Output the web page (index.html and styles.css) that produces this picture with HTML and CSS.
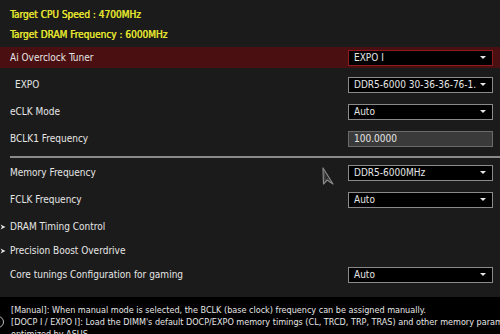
FILE: index.html
```html
<!DOCTYPE html>
<html lang="en">
<head>
    <meta charset="UTF-8">
    <title>Ai Tweaker</title>
    <link rel="stylesheet" href="styles.css">
</head>
<body>
    <div class="screen">
        <div class="targets">
            <p class="target-text">Target CPU Speed : 4700MHz</p>
            <p class="target-text">Target DRAM Frequency : 6000MHz</p>
        </div>

        <div class="settings">
            <div class="row active">
                <span class="label">Ai Overclock Tuner</span>
                <div class="select select-active"><span>EXPO I</span><span class="caret"></span></div>
            </div>
            <div class="row">
                <span class="label label-sub">EXPO</span>
                <div class="select"><span>DDR5-6000 30-36-36-76-1.</span><span class="caret"></span></div>
            </div>
            <div class="row">
                <span class="label">eCLK Mode</span>
                <div class="select"><span>Auto</span><span class="caret"></span></div>
            </div>
            <div class="row">
                <span class="label">BCLK1 Frequency</span>
                <div class="select input"><span>100.0000</span></div>
            </div>

            <div class="divider"></div>

            <div class="row">
                <span class="label">Memory Frequency</span>
                <div class="select"><span>DDR5-6000MHz</span><span class="caret"></span></div>
            </div>
            <div class="row">
                <span class="label">FCLK Frequency</span>
                <div class="select"><span>Auto</span><span class="caret"></span></div>
            </div>
            <div class="row row-link">
                <span class="label label-link">
                    <svg class="chevron" width="6" height="6" viewBox="0 0 6 6"><path d="M0.5 0.5 L5.5 3 L0.5 5.5 L2 3 Z" fill="#e6e6e6"/></svg>
                    DRAM Timing Control
                </span>
            </div>
            <div class="row row-link">
                <span class="label label-link">
                    <svg class="chevron" width="6" height="6" viewBox="0 0 6 6"><path d="M0.5 0.5 L5.5 3 L0.5 5.5 L2 3 Z" fill="#e6e6e6"/></svg>
                    Precision Boost Overdrive
                </span>
            </div>
            <div class="row">
                <span class="label">Core tunings Configuration for gaming</span>
                <div class="select"><span>Auto</span><span class="caret"></span></div>
            </div>
        </div>

        <div class="help">
            <span class="help-icon"></span>
            <p class="help-text">
                [Manual]: When manual mode is selected, the BCLK (base clock) frequency can be assigned manually.<br>
                [DOCP I / EXPO I]: Load the DIMM's default DOCP/EXPO memory timings (CL, TRCD, TRP, TRAS) and other memory parameters<br>
                optimized by ASUS.
            </p>
        </div>

        <svg class="cursor" width="16" height="20" viewBox="0 0 16 20">
            <path d="M3 1 L3.5 17 L7 13 L13 17 Z" fill="#2a2a2a" stroke="#8a8a8a" stroke-width="1.2" stroke-linejoin="round"/>
            <path d="M4.5 5 L5 13.5 L7 11.5 L10.5 14" fill="none" stroke="#555" stroke-width="0.8"/>
        </svg>
    </div>
</body>
</html>
```

FILE: styles.css
```css
:root {
    --bg-color: #1b1b1b;
    --text-color: #e6e6e6;
    --yellow-color: #e4e42e;
    --active-color: #4a0f10;
    --active-border: #8e1b1d;
    --box-border: #8a8a8a;
}

body {
    margin: 0;
    padding: 0;
    background-color: var(--bg-color);
    color: var(--text-color);
    font-family: "Liberation Sans Narrow", "DejaVu Sans Condensed", "Liberation Sans", sans-serif;
    font-size: 10px;
}

.screen {
    position: relative;
    width: 500px;
    height: 334px;
    overflow: hidden;
    display: flex;
    flex-direction: column;
}

.targets {
    padding: 5px 10px 0;
    margin-bottom: 3px;
}

.target-text {
    margin: 0;
    line-height: 19.5px;
    color: var(--yellow-color);
    text-shadow: 0.4px 0 0 var(--yellow-color);
}

.settings {
    flex: 1;
}

.row {
    display: flex;
    align-items: center;
    justify-content: space-between;
    height: 21px;
    padding: 0 7px 0 10px;
    margin-bottom: 6px;
}

.row.active {
    background-color: var(--active-color);
}

.row-link {
    margin-bottom: 3px;
    padding-left: 0;
}

.label-sub {
    padding-left: 5px;
}

.label-link {
    display: flex;
    align-items: center;
}

.chevron {
    width: 10px;
    padding-right: 4px;
    box-sizing: border-box;
}

.select {
    box-sizing: border-box;
    width: 145px;
    height: 16px;
    border: 1px solid var(--box-border);
    background-color: #000;
    display: flex;
    align-items: center;
    justify-content: space-between;
    padding: 0 6px 0 5px;
}

.select-active {
    border-color: var(--active-border);
}

.select.input {
    background-color: #3a3a3a;
    border-color: #6a6a6a;
}

.caret {
    width: 0;
    height: 0;
    border-left: 3px solid transparent;
    border-right: 3px solid transparent;
    border-top: 3px solid var(--text-color);
}

.divider {
    height: 2px;
    margin: 7px 0 4px 10px;
    background-color: #8a8a8a;
}

.help {
    height: 37px;
    background-color: #000;
    display: flex;
    align-items: flex-start;
}

.help-icon {
    flex: none;
    width: 10px;
    height: 10px;
    margin: 19px 0 0 -8px;
    border: 1px solid #bbb;
    border-radius: 50%;
}

.help-text {
    margin: 7px 0 0 7px;
    font-size: 9px;
    line-height: 12px;
    white-space: nowrap;
}

.cursor {
    position: absolute;
    left: 320px;
    top: 167px;
}
```
